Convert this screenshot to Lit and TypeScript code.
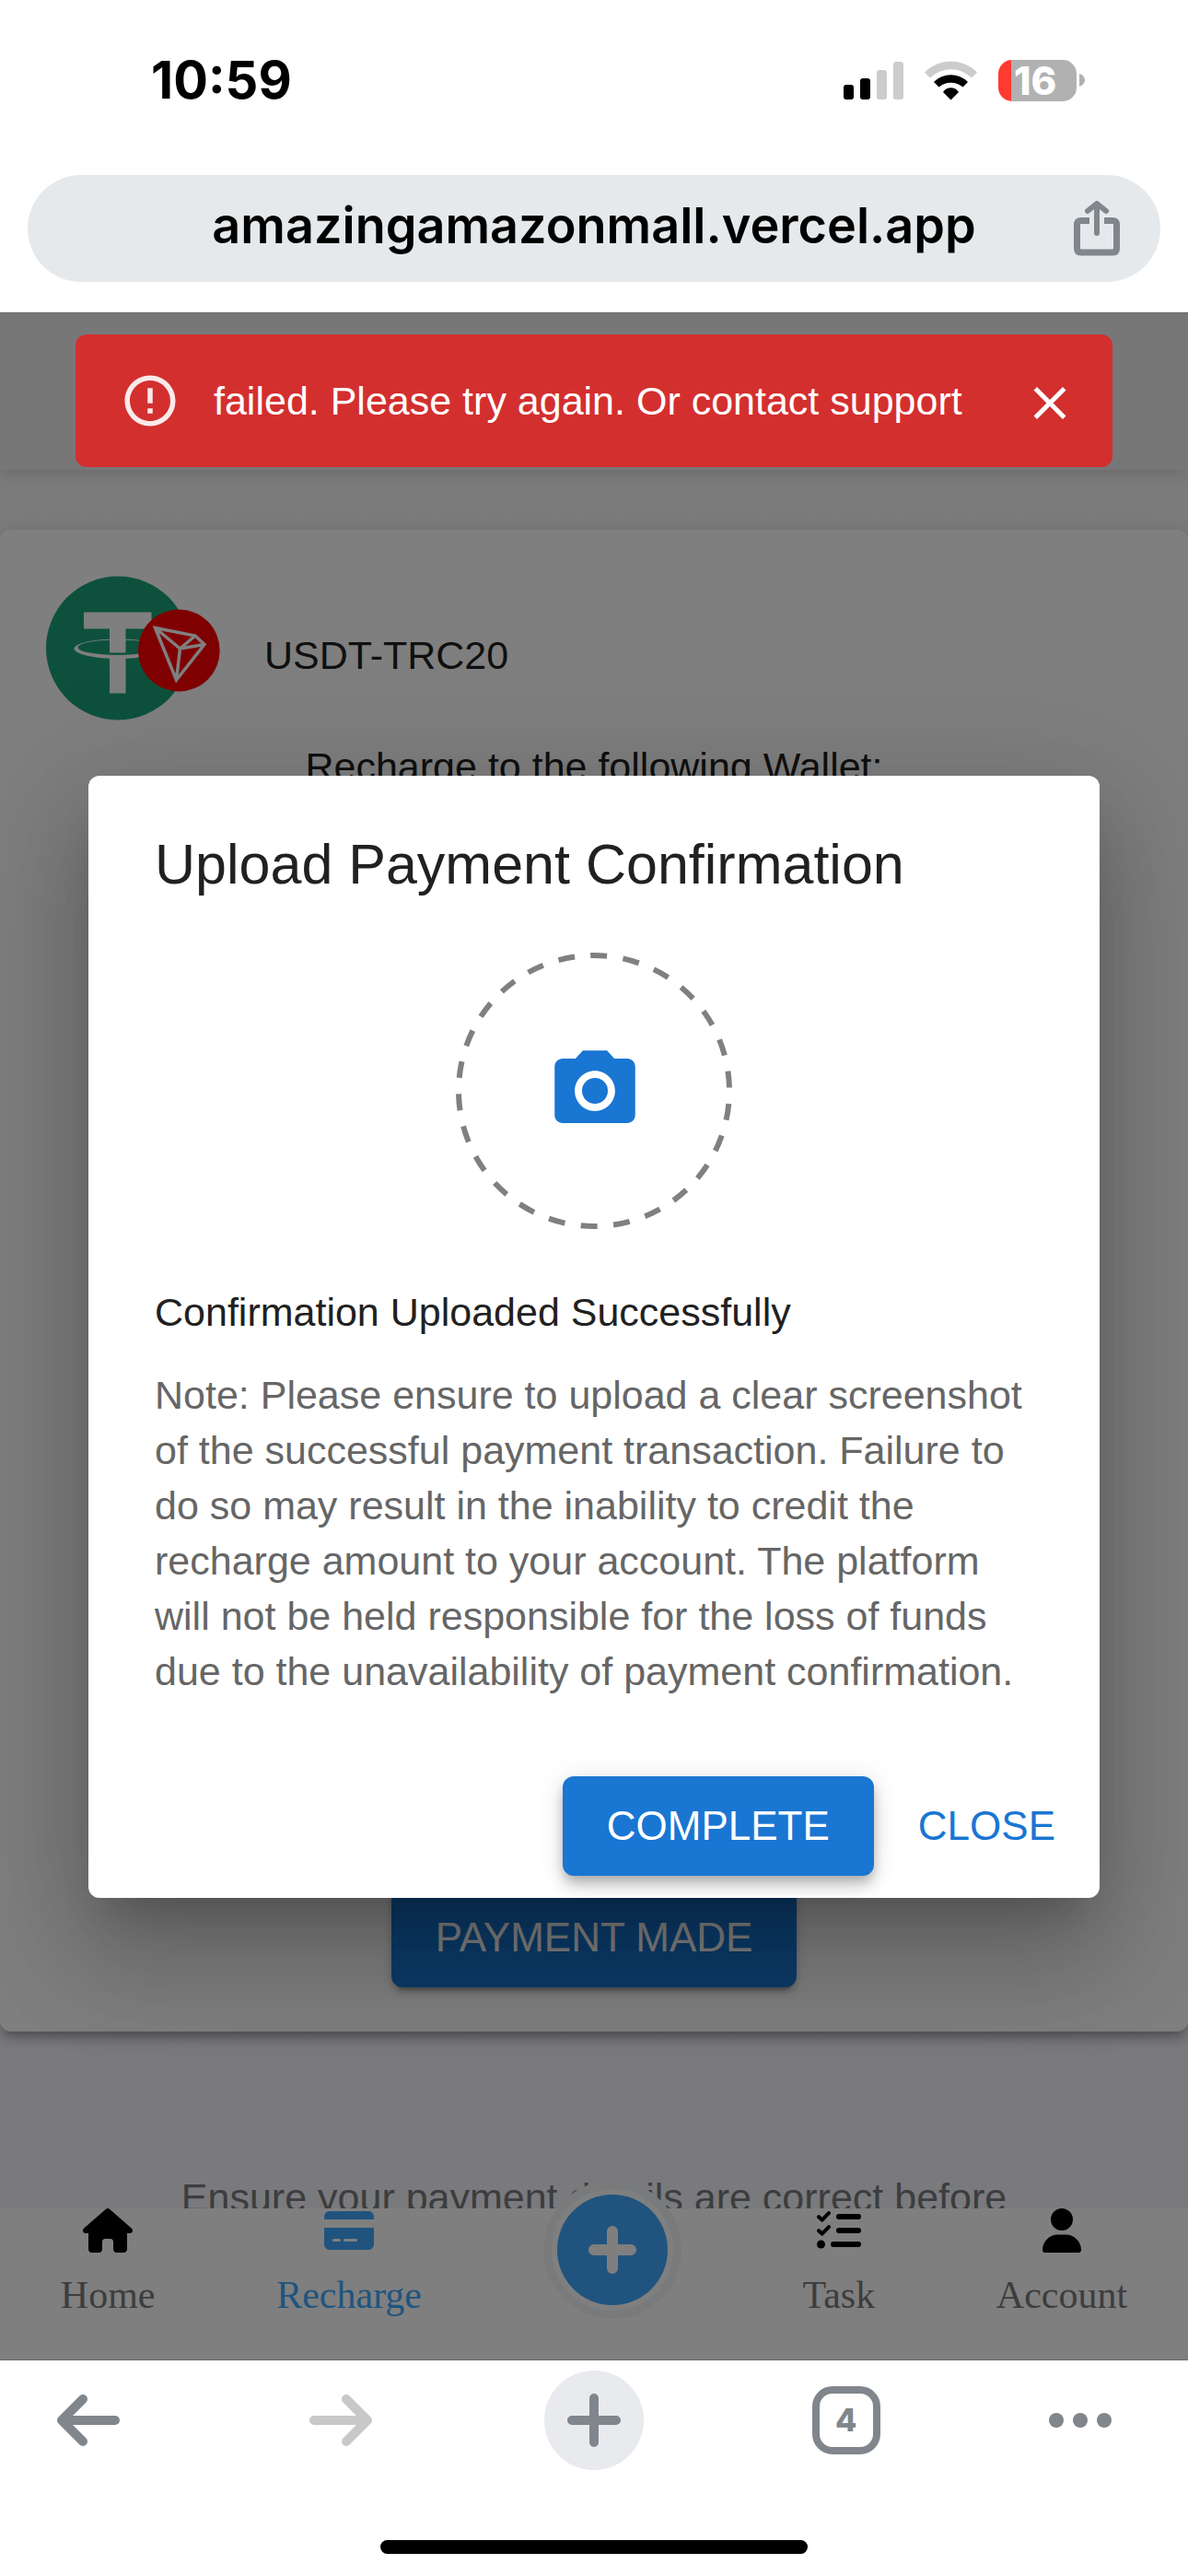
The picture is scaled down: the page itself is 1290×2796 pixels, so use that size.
import { LitElement, html, css, svg } from "lit";
import { customElement, state } from "lit/decorators.js";
import { classMap } from "lit/directives/class-map.js";

interface NavItem {
  id: string;
  label: string;
  width: number;
  icon: unknown;
}

const houseIcon = svg`<path d="M575.8 255.5c0 18-15 32.1-32 32.1h-32l.7 160.2c0 2.7-.2 5.4-.5 8.1V472c0 22.1-17.9 40-40 40H456c-1.1 0-2.2 0-3.3-.1c-1.4 .1-2.8 .1-4.2 .1H416 392c-22.1 0-40-17.9-40-40V448 384c0-17.7-14.3-32-32-32H256c-17.7 0-32 14.3-32 32v64 24c0 22.1-17.9 40-40 40H160 128.1c-1.5 0-3-.1-4.5-.2c-1.2 .1-2.4 .2-3.6 .2H104c-22.1 0-40-17.9-40-40V360c0-.9 0-1.9 .1-2.8V287.6H32c-18 0-32-14-32-32.1c0-9 3-17 10-24L266.4 8c7-7 15-8 22-8s15 2 21 7L564.8 231.5c8 7 12 15 11 24z"/>`;
const cardIcon = svg`<path d="M64 32C28.7 32 0 60.7 0 96v32H576V96c0-35.3-28.7-64-64-64H64zM576 224H0V416c0 35.3 28.7 64 64 64H512c35.3 0 64-28.7 64-64V224zM112 352h64c8.8 0 16 7.2 16 16s-7.2 16-16 16H112c-8.8 0-16-7.2-16-16s7.2-16 16-16zm112 16c0-8.8 7.2-16 16-16H368c8.8 0 16 7.2 16 16s-7.2 16-16 16H240c-8.8 0-16-7.2-16-16z"/>`;
const userIcon = svg`<path d="M224 256A128 128 0 1 0 224 0a128 128 0 1 0 0 256zm-45.7 48C79.8 304 0 383.8 0 482.3C0 498.7 13.3 512 29.7 512H418.3c16.4 0 29.7-13.3 29.7-29.7C448 383.8 368.2 304 269.7 304H178.3z"/>`;
const listIcon = svg`
  <g fill="none" stroke="currentColor" stroke-width="43" stroke-linecap="round" stroke-linejoin="round">
    <path d="M22 98L60 134L138 54M22 258L60 294L138 214"/>
  </g>
  <g fill="none" stroke="currentColor" stroke-width="64" stroke-linecap="round">
    <path d="M256 96H480M256 256H480M192 416H480"/>
  </g>
  <circle cx="48" cy="416" r="48"/>`;

const leftItems: NavItem[] = [
  { id: "home", label: "Home", width: 576, icon: houseIcon },
  { id: "recharge", label: "Recharge", width: 576, icon: cardIcon },
];
const rightItems: NavItem[] = [
  { id: "task", label: "Task", width: 512, icon: listIcon },
  { id: "account", label: "Account", width: 448, icon: userIcon },
];

@customElement("app-root")
export class AppRoot extends LitElement {
  @state() private active = "recharge";
  @state() private dialogOpen = true;
  @state() private alertOpen = true;

  static styles = css`
    :host {
      display: flex;
      flex-direction: column;
      min-height: 100vh;
      background: #fff;
      font-family: "Liberation Sans", Arial, sans-serif;
      font-size: 43px;
      line-height: 60px;
      color: #212121;
    }
    * {
      box-sizing: border-box;
    }
    h1, h2, p {
      margin: 0;
      font-size: inherit;
      font-weight: 400;
    }
    button {
      margin: 0;
      padding: 0;
      border: 0;
      background: none;
      font: inherit;
      color: inherit;
      cursor: pointer;
    }
    a {
      color: inherit;
      text-decoration: none;
    }
    svg {
      display: block;
      flex: none;
    }

    .status {
      display: flex;
      align-items: center;
      justify-content: space-between;
      height: 190px;
      padding: 0 112px 16px 164px;
      font-family: Inter, sans-serif;
      color: #000;
    }
    .time {
      font-size: 56px;
      font-weight: 700;
    }
    .indicators {
      display: flex;
      align-items: center;
      gap: 23px;
    }
    .battery {
      display: flex;
      align-items: center;
      gap: 3px;
    }
    .battery-body {
      width: 85px;
      height: 45px;
      border-radius: 15px;
      background: linear-gradient(90deg, #ff3b30 14px, #b1b1b1 14px);
      color: #fff;
      font-size: 42px;
      font-weight: 800;
      line-height: 45px;
      padding-left: 17px;
    }

    .address {
      padding: 0 30px 33px;
    }
    .pill {
      display: grid;
      grid-template-columns: 1fr auto 1fr;
      align-items: center;
      height: 116px;
      padding: 0 44px;
      border-radius: 58px;
      background: #e6e9eb;
    }
    .url {
      grid-column: 2;
      padding-bottom: 6px;
      font-family: Inter, sans-serif;
      font-size: 54px;
      font-weight: 600;
      color: #000;
    }
    .share {
      justify-self: end;
    }

    .page {
      position: relative;
      flex: 1;
      display: flex;
      flex-direction: column;
      overflow: hidden;
      border-top: 1px solid #69696b;
      border-bottom: 1px solid #69696b;
      background: linear-gradient(#f7f7f7, #f3f4fb);
    }
    .app-header {
      height: 170px;
      background: #eee;
      box-shadow: 0 4px 16px rgba(0, 0, 0, 0.14);
    }
    .card {
      flex: 1;
      display: flex;
      flex-direction: column;
      gap: 20px;
      margin-top: 65px;
      padding: 50px 50px 48px;
      border-radius: 12px;
      background: #fff;
      box-shadow: 0 9px 9px -6px rgba(0, 0, 0, 0.2),
        0 9px 12px rgba(0, 0, 0, 0.14), 0 3px 24px rgba(0, 0, 0, 0.12);
    }
    .coin {
      display: flex;
      align-items: center;
      gap: 48px;
    }
    .coin-name {
      padding-top: 14px;
    }
    .centered {
      text-align: center;
    }
    .filled {
      height: 108px;
      padding: 0 48px;
      border-radius: 12px;
      background: #1976d2;
      color: #fff;
      font-size: 44px;
      box-shadow: 0 9px 3px -6px rgba(0, 0, 0, 0.2),
        0 6px 6px rgba(0, 0, 0, 0.14), 0 3px 15px rgba(0, 0, 0, 0.12);
    }
    .actions .filled {
      box-shadow: 0 6px 12px -3px rgba(0, 0, 0, 0.2),
        0 12px 15px rgba(0, 0, 0, 0.14), 0 3px 30px rgba(0, 0, 0, 0.12);
    }
    .card .filled {
      align-self: center;
      margin-top: auto;
    }
    .hint {
      padding: 150px 0 146px;
      text-align: center;
      color: #7a7a7a;
    }

    .nav {
      position: absolute;
      left: 0;
      right: 0;
      bottom: 0;
      display: flex;
      align-items: flex-start;
      justify-content: space-around;
      padding-bottom: 46px;
      background: #fff;
      font-family: "Liberation Serif", "Times New Roman", serif;
      font-size: 42px;
      line-height: 48px;
    }
    .nav-item {
      display: flex;
      flex-direction: column;
      align-items: center;
      gap: 22px;
      color: #7a7a7a;
    }
    .nav-item svg {
      color: #000;
    }
    .nav-item.active,
    .nav-item.active svg {
      color: #40a9ff;
    }
    .fab {
      display: grid;
      place-items: center;
      width: 150px;
      height: 150px;
      margin: -30px 0 -16px;
      border: 9px solid #f2f4f6;
      border-radius: 50%;
      background: #fff;
    }

    .backdrop {
      position: absolute;
      inset: 0;
      display: flex;
      align-items: center;
      padding: 0 96px;
      background: rgba(0, 0, 0, 0.5);
    }
    .dialog {
      flex: 1;
      display: flex;
      flex-direction: column;
      border-radius: 12px;
      background: #fff;
      box-shadow: 0 33px 45px -21px rgba(0, 0, 0, 0.2),
        0 72px 114px 9px rgba(0, 0, 0, 0.14),
        0 27px 138px 24px rgba(0, 0, 0, 0.12);
    }
    .dialog-title {
      padding: 48px 72px;
      font-size: 61px;
      line-height: 96px;
    }
    .dialog-body {
      display: flex;
      flex-direction: column;
      padding: 0 72px 60px;
    }
    .upload {
      align-self: center;
      margin-bottom: 60px;
      border-radius: 50%;
    }
    .note {
      margin-top: 30px;
      color: #666;
    }
    .actions {
      display: flex;
      justify-content: flex-end;
      gap: 24px;
      padding: 24px;
    }
    .text-button {
      padding: 0 24px;
      font-size: 44px;
      color: #1976d2;
    }

    .alert {
      position: absolute;
      top: 23px;
      left: 82px;
      right: 82px;
      display: flex;
      align-items: center;
      padding: 39px 38px 39px 48px;
      border-radius: 12px;
      background: #d32f2f;
      color: #fff;
    }
    .alert-text {
      flex: 1;
      padding-left: 36px;
    }
    .alert-icon {
      opacity: 0.9;
    }

    .toolbar {
      display: flex;
      align-items: center;
      justify-content: space-between;
      padding: 11px 83px 0 42px;
      color: #80868b;
    }
    .tool {
      display: grid;
      place-items: center;
      width: 108px;
      height: 108px;
    }
    .tool.more {
      width: 68px;
    }
    .tool.round {
      border-radius: 50%;
      background: #e8eaed;
    }
    .tool:disabled {
      color: #c8c8c8;
    }
    .tabs {
      display: grid;
      place-items: center;
      width: 74px;
      height: 74px;
      border: 8px solid #80868b;
      border-radius: 22px;
      font-family: Inter, sans-serif;
      font-size: 34px;
      font-weight: 800;
      line-height: 40px;
    }
    .home-indicator {
      align-self: center;
      width: 36%;
      height: 15px;
      margin: 76px 0 24px;
      border-radius: 8px;
      background: #000;
    }
  `;

  private renderNavItem(item: NavItem) {
    return html`
      <a
        href="#${item.id}"
        class=${classMap({ "nav-item": true, active: this.active === item.id })}
        @click=${() => (this.active = item.id)}
      >
        <svg viewBox="0 0 ${item.width} 512" width=${(item.width * 48) / 512} height="48" fill="currentColor" aria-hidden="true">
          ${item.icon}
        </svg>
        <span>${item.label}</span>
      </a>
    `;
  }

  private renderStatus() {
    return html`
      <div class="status">
        <span class="time">10:59</span>
        <div class="indicators">
          <svg width="65" height="41" viewBox="0 0 65 41" aria-hidden="true">
            <rect x="0" y="25" width="11" height="16" rx="3" />
            <rect x="18" y="18" width="11" height="23" rx="3" />
            <rect x="36" y="9" width="11" height="32" rx="3" fill="#ccc" />
            <rect x="54" y="0" width="11" height="41" rx="3" fill="#ccc" />
          </svg>
          <svg width="57" height="43" viewBox="0 0 57 43" aria-hidden="true">
            <path fill="#ccc" d="M.5 12.5A40 40 0 0 1 56.500 12.500L51 18A32 32 0 0 0 6 18Z" stroke="#ccc" stroke-linejoin="round" />
            <path d="M10 23A26 26 0 0 1 47 23L41.500 28.500A20 20 0 0 0 15.500 28.500Z" />
            <path d="M20 34A10 10 0 0 1 37 34L28.500 42.500Z" />
          </svg>
          <div class="battery">
            <div class="battery-body">16</div>
            <svg width="6" height="14" viewBox="0 0 6 14" aria-hidden="true">
              <path d="M0 0C8 3 8 11 0 14Z" fill="#b1b1b1" />
            </svg>
          </div>
        </div>
      </div>
    `;
  }

  private renderCoin() {
    return html`
      <div class="coin">
        <svg width="189" height="157" viewBox="0 0 189 157" aria-hidden="true">
          <circle cx="78" cy="78.500" r="78" fill="#1ba27a" />
          <g fill="#fff">
            <path d="M41 39.500H114.500V57.500H86.500V83.500H69V57.500H41Z" />
            <path d="M69 87H86.500V127.500H69Z" />
            <path fill-rule="evenodd" d="M30.500 79.200a47.500 10.800 0 1 0 95 0a47.500 10.800 0 1 0 -95 0ZM34.500 77.700a43.500 8.300 0 1 1 87 0a43.500 8.300 0 1 1 -87 0Z" />
          </g>
          <circle cx="144.300" cy="81" r="44.400" fill="#f00" />
          <path d="M118.500 56.500L162 65L172 74.500L141.500 113ZM118.500 56.500L145.500 79L162 65M172 74.500L145.500 79L141.500 113" fill="none" stroke="#fff" stroke-width="3.500" />
        </svg>
        <span class="coin-name">USDT-TRC20</span>
      </div>
    `;
  }

  private renderDialog() {
    return html`
      <div class="backdrop">
        <section class="dialog" role="dialog" aria-labelledby="dialog-title">
          <h1 class="dialog-title" id="dialog-title">Upload Payment Confirmation</h1>
          <div class="dialog-body">
            <button class="upload" aria-label="Upload screenshot">
              <svg width="300" height="300" viewBox="0 0 300 300" aria-hidden="true">
                <circle cx="150" cy="150" r="147" fill="none" stroke="#808080" stroke-width="6" stroke-dasharray="18 17.524" transform="rotate(-91.500 150 150)" />
                <g transform="translate(98.500 97.500) scale(4.375)" fill="#1976d2">
                  <circle cx="12" cy="12" r="3.200" />
                  <path d="M9 2 7.170 4H4c-1.100 0-2 .9-2 2v12c0 1.100.9 2 2 2h16c1.100 0 2-.9 2-2V6c0-1.100-.9-2-2-2h-3.170L15 2H9zm3 15c-2.760 0-5-2.240-5-5s2.240-5 5-5 5 2.240 5 5-2.240 5-5 5z" />
                </g>
              </svg>
            </button>
            <h2>Confirmation Uploaded Successfully</h2>
            <p class="note">
              Note: Please ensure to upload a clear screenshot of the successful
              payment transaction. Failure to do so may result in the inability
              to credit the recharge amount to your account. The platform will
              not be held responsible for the loss of funds due to the
              unavailability of payment confirmation.
            </p>
          </div>
          <div class="actions">
            <button class="filled">COMPLETE</button>
            <button class="text-button" @click=${() => (this.dialogOpen = false)}>CLOSE</button>
          </div>
        </section>
      </div>
    `;
  }

  private renderAlert() {
    return html`
      <div class="alert" role="alert">
        <svg class="alert-icon" width="66" height="66" viewBox="0 0 24 24" fill="currentColor" aria-hidden="true">
          <path d="M11 15h2v2h-2zm0-8h2v6h-2zm.99-5C6.470 2 2 6.480 2 12s4.470 10 9.990 10C17.520 22 22 17.520 22 12S17.520 2 11.990 2zM12 20c-4.420 0-8-3.580-8-8s3.580-8 8-8 8 3.580 8 8-3.580 8-8 8z" />
        </svg>
        <span class="alert-text">failed. Please try again. Or contact support</span>
        <button aria-label="Dismiss" @click=${() => (this.alertOpen = false)}>
          <svg width="60" height="60" viewBox="0 -1 24 24" fill="currentColor" aria-hidden="true">
            <path d="M19 6.410L17.590 5 12 10.590 6.410 5 5 6.410 10.590 12 5 17.590 6.410 19 12 13.410 17.590 19 19 17.590 13.410 12z" />
          </svg>
        </button>
      </div>
    `;
  }

  private renderToolbar() {
    return html`
      <div class="toolbar">
        <button class="tool" aria-label="Back">
          <svg width="70" height="58" viewBox="0 0 70 58" fill="none" stroke="currentColor" stroke-width="10" stroke-linecap="round" stroke-linejoin="round">
            <path d="M64 29H7M29 6L6 29L29 52" />
          </svg>
        </button>
        <button class="tool" aria-label="Forward" disabled>
          <svg width="70" height="58" viewBox="0 0 70 58" fill="none" stroke="currentColor" stroke-width="10" stroke-linecap="round" stroke-linejoin="round">
            <path d="M6 29H63M41 6L64 29L41 52" />
          </svg>
        </button>
        <button class="tool round" aria-label="New tab">
          <svg width="58" height="58" viewBox="0 0 58 58" stroke="currentColor" stroke-width="10" stroke-linecap="round">
            <path d="M5 29H53M29 5V53" />
          </svg>
        </button>
        <button class="tool" aria-label="Open tabs"><span class="tabs">4</span></button>
        <button class="tool more" aria-label="More">
          <svg width="68" height="16" viewBox="1 0 68 16" fill="currentColor">
            <circle cx="9" cy="8" r="8" />
            <circle cx="35" cy="8" r="8" />
            <circle cx="61" cy="8" r="8" />
          </svg>
        </button>
      </div>
      <div class="home-indicator"></div>
    `;
  }

  render() {
    return html`
      ${this.renderStatus()}
      <div class="address">
        <div class="pill">
          <span class="url">amazingamazonmall.vercel.app</span>
          <button class="share" aria-label="Share">
            <svg width="50" height="60" viewBox="0 0 50 60" fill="none" stroke="#80868b" aria-hidden="true">
              <path d="M17 21.500H8Q3.500 21.500 3.500 26V51.500Q3.500 56 8 56H42Q46.500 56 46.500 51.500V26Q46.500 21.500 42 21.500H33" stroke-width="7" />
              <path d="M25 4V35M15 11L25 3L35 11" stroke-width="6" stroke-linecap="round" stroke-linejoin="round" />
            </svg>
          </button>
        </div>
      </div>
      <main class="page">
        <header class="app-header"></header>
        <section class="card">
          ${this.renderCoin()}
          <p class="centered">Recharge to the following Wallet:</p>
          <button class="filled">PAYMENT MADE</button>
        </section>
        <p class="hint">Ensure your payment details are correct before</p>
        <nav class="nav">
          ${leftItems.map((item) => this.renderNavItem(item))}
          <button class="fab" aria-label="Add">
            <svg width="120" height="120" viewBox="0 0 120 120" aria-hidden="true">
              <circle cx="60" cy="60" r="60" fill="#40a9ff" />
              <path d="M40 60H80M60 40V80" stroke="#fff" stroke-width="12" stroke-linecap="round" />
            </svg>
          </button>
          ${rightItems.map((item) => this.renderNavItem(item))}
        </nav>
        ${this.dialogOpen ? this.renderDialog() : null}
        ${this.alertOpen ? this.renderAlert() : null}
      </main>
      ${this.renderToolbar()}
    `;
  }
}
